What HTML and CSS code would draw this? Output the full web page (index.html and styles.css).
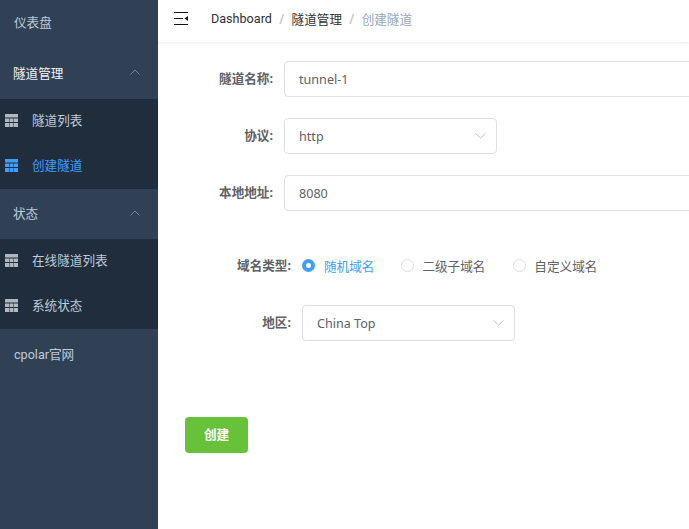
FILE: index.html
```html
<!DOCTYPE html>
<html lang="zh">
<head>
<meta charset="utf-8">
<title>创建隧道</title>
<link rel="stylesheet" href="styles.css">
</head>
<body>
<div class="app">
  <aside class="sidebar">
    <a class="menu-item top">仪表盘</a>
    <div class="menu-item head active-head"><span>隧道管理</span><svg class="chev" width="10" height="6" viewBox="0 0 10 6"><path d="M.5 5.500 5 1l4.500 4.500" fill="none" stroke="#6f7f90"/></svg></div>
    <div class="sub">
      <a class="sub-item"><svg class="grid" width="13" height="13" viewBox="0 0 13 13"><path d="M0 0h13v3.500H0zM0 4.500h4V8H0zM4.500 4.500h4V8h-4zM9 4.500h4V8H9zM0 9h4v4H0zM4.500 9h4v4h-4zM9 9h4v4H9z" fill="currentColor"/></svg>隧道列表</a>
      <a class="sub-item current"><svg class="grid" width="13" height="13" viewBox="0 0 13 13"><path d="M0 0h13v3.500H0zM0 4.500h4V8H0zM4.500 4.500h4V8h-4zM9 4.500h4V8H9zM0 9h4v4H0zM4.500 9h4v4h-4zM9 9h4v4H9z" fill="currentColor"/></svg>创建隧道</a>
    </div>
    <div class="menu-item head status-head"><span>状态</span><svg class="chev" width="10" height="6" viewBox="0 0 10 6"><path d="M.5 5.500 5 1l4.500 4.500" fill="none" stroke="#6f7f90"/></svg></div>
    <div class="sub">
      <a class="sub-item"><svg class="grid" width="13" height="13" viewBox="0 0 13 13"><path d="M0 0h13v3.500H0zM0 4.500h4V8H0zM4.500 4.500h4V8h-4zM9 4.500h4V8H9zM0 9h4v4H0zM4.500 9h4v4h-4zM9 9h4v4H9z" fill="currentColor"/></svg>在线隧道列表</a>
      <a class="sub-item"><svg class="grid" width="13" height="13" viewBox="0 0 13 13"><path d="M0 0h13v3.500H0zM0 4.500h4V8H0zM4.500 4.500h4V8h-4zM9 4.500h4V8H9zM0 9h4v4H0zM4.500 9h4v4h-4zM9 9h4v4H9z" fill="currentColor"/></svg>系统状态</a>
    </div>
    <a class="menu-item site">cpolar官网</a>
  </aside>
  <main class="main">
    <header class="navbar">
      <svg class="hamburger" width="14" height="14" viewBox="0 0 14 14"><path d="M0 .5h14M0 12.500h14M0 6.500h9" stroke="#111" fill="none"/><path d="M10.500 6.500 14 4v5z" fill="#111"/></svg>
      <nav class="crumbs"><span>Dashboard</span><i>/</i><span>隧道管理</span><i>/</i><span class="last">创建隧道</span></nav>
    </header>
    <form class="form">
      <div class="row"><label class="label">隧道名称:</label><div class="control wide">tunnel-1</div></div>
      <div class="row"><label class="label">协议:</label><div class="control select">http<svg class="down" width="11" height="6" viewBox="0 0 11 6"><path d="M.5.500 5.500 5l5-4.500" fill="none" stroke="#c0c4cc"/></svg></div></div>
      <div class="row"><label class="label">本地地址:</label><div class="control wide">8080</div></div>
      <div class="row radios">
        <label class="label lab2">域名类型:</label>
        <div class="radio on"><span class="dot"></span>随机域名</div>
        <div class="radio"><span class="dot"></span>二级子域名</div>
        <div class="radio"><span class="dot"></span>自定义域名</div>
      </div>
      <div class="row"><label class="label lab2">地区:</label><div class="control select">China Top<svg class="down" width="11" height="6" viewBox="0 0 11 6"><path d="M.5.500 5.500 5l5-4.500" fill="none" stroke="#c0c4cc"/></svg></div></div>
      <button class="btn" type="button">创建</button>
    </form>
  </main>
</div>
</body>
</html>
```
FILE: styles.css
```css
* { box-sizing: border-box; }
html, body { margin: 0; height: 100%; overflow: hidden; background: #fff; }
body { font-family: "Noto Sans", "Noto Sans CJK SC", sans-serif; font-size: 12.6px; color: #606266; }
.app { display: flex; height: 529px; width: 689px; overflow: hidden; }
.sidebar { width: 158px; flex: none; background: #304156; color: #bfcbd9; display: flex; flex-direction: column; }
.menu-item { height: 50px; display: flex; align-items: center; justify-content: space-between; padding: 0 20px 2px 14px; flex: none; }
.menu-item.top { height: 49px; padding-bottom: 6px; }
.head { padding-left: 13px; padding-right: 18px; }
.active-head { color: #f4f4f5; padding-bottom: 4px; }
.status-head { padding-bottom: 3px; }
.site { font-family: Roboto, "Noto Sans CJK SC", sans-serif; }
.sub { background: #1f2d3d; }
.sub-item { height: 45px; display: flex; align-items: center; padding: 0 0 4px 5px; gap: 14px; }
.sub-item .grid { color: #b0b7c1; margin-top: 2px; }
.sub-item.current { color: #409eff; }
.sub-item.current .grid { color: #409eff; }
.main { flex: 1; min-width: 0; display: flex; flex-direction: column; }
.navbar { height: 42px; flex: none; display: flex; align-items: center; padding: 0 0 2px 16px; box-shadow: 0 1px 4px rgba(0, 21, 41, .08); }
.hamburger { flex: none; margin-bottom: 2px; }
.crumbs { margin: 0 0 3px 23px; display: flex; align-items: center; color: #303133; white-space: nowrap; font-family: Roboto, "Noto Sans CJK SC", sans-serif; }
.crumbs i { font-style: normal; color: #c0c4cc; font-weight: 700; margin: 0 7.500px; }
.crumbs .last { color: #97a8be; }
.form { padding: 19px 0 0 27px; display: flex; flex-direction: column; align-items: flex-start; }
.row { display: flex; align-items: center; margin-bottom: 21px; white-space: nowrap; }
.label { width: 99px; padding: 0 11px 3px 0; text-align: right; font-weight: 700; color: #606266; flex: none; }
.lab2 { width: 117px; }
.radios .label { padding-bottom: 1px; }
.control { height: 36px; border: 1px solid #dcdfe6; border-radius: 4px; padding: 0 14px; display: flex; align-items: center; background: #fff; flex: none; }
.wide { width: 600px; }
.select { width: 213px; justify-content: space-between; padding-right: 10px; }
.radios { margin: 15px 0 22px; height: 36px; }
.radio { display: flex; align-items: center; margin-right: 28px; color: #606266; }
.radio.on { color: #409eff; margin-right: 27px; }
.dot { width: 13px; height: 13px; border: 1px solid #dcdfe6; border-radius: 50%; margin-right: 8px; background: #fff; flex: none; }
.radio.on .dot { border: 4px solid #409eff; background: #fff; margin-right: 9px; }
.btn { width: 63px; height: 36px; margin-top: 55px; padding: 0 0 3px; border: 0; border-radius: 4px; background: #67c23a; color: #fff; font: 700 12.6px "Noto Sans", "Noto Sans CJK SC", sans-serif; }
```
